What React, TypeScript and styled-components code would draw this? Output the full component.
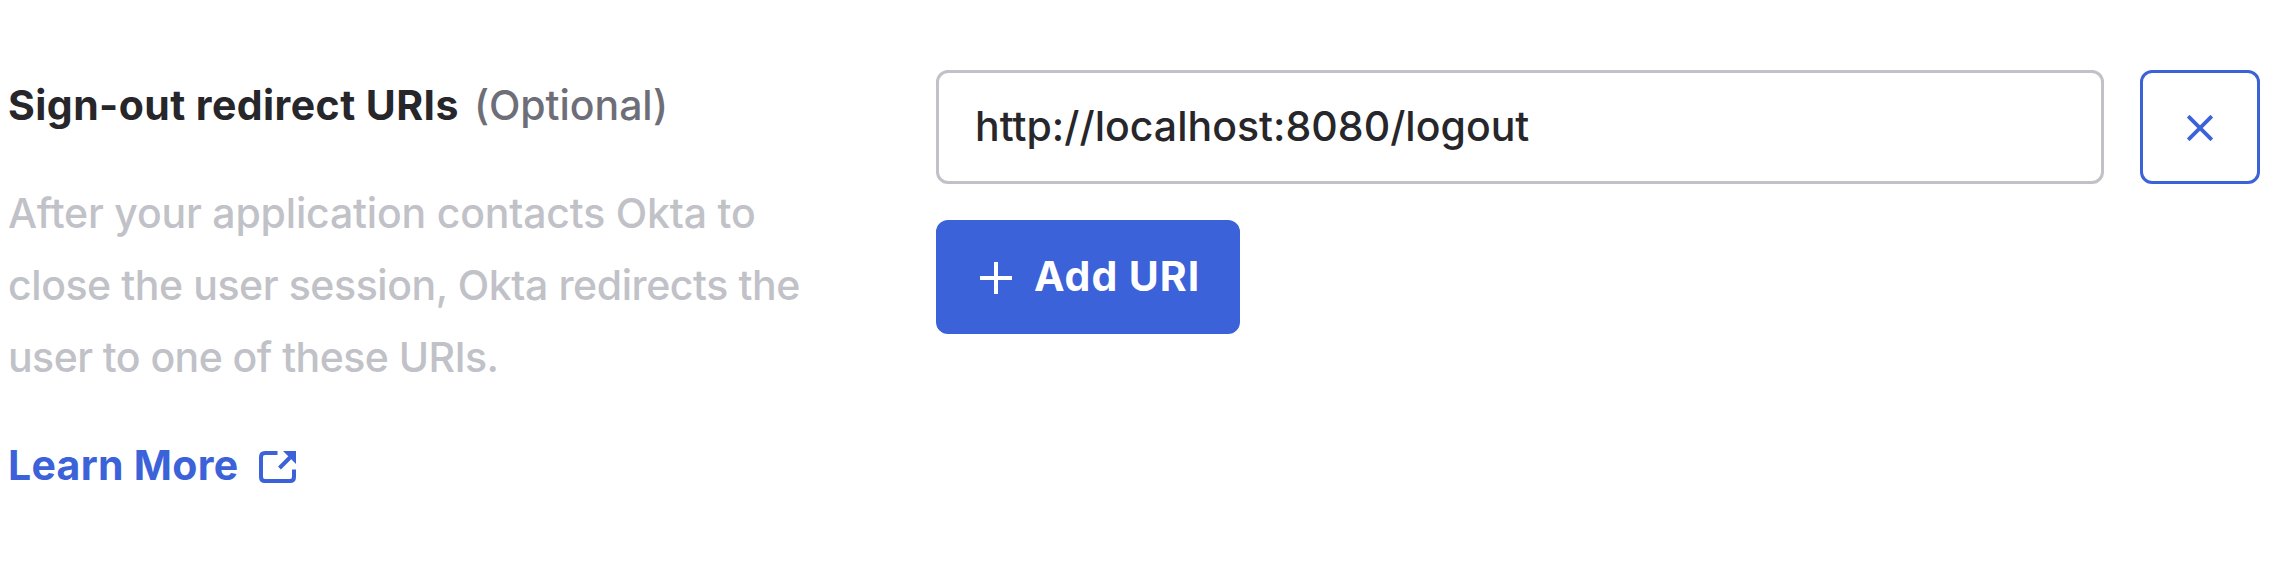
import React from 'react';
import styled, { createGlobalStyle } from 'styled-components';

const blue = '#3c62d9';
const ink = '#27262b';

const GlobalStyle = createGlobalStyle`
  *, *::before, *::after { box-sizing: border-box; }
  body {
    margin: 0;
    background: #fff;
    color: ${ink};
    font: 400 41px/72px Inter, "Liberation Sans", sans-serif;
  }
`;

const Section = styled.section`
  display: grid;
  grid-template-columns: 928px 1324px;
  height: 572px;
  padding: 69px 0 0 8px;
  align-items: start;
`;

const Info = styled.div`
  display: flex;
  flex-direction: column;
  gap: 36px;
`;

const Heading = styled.div`
  display: flex;
  gap: 15px;
  white-space: nowrap;
`;

const Title = styled.label`
  font-weight: 700;
  letter-spacing: 0.43px;
`;

const Optional = styled.span`
  color: #6e6e78;
  font-weight: 500;
  letter-spacing: -0.05px;
`;

const Description = styled.p`
  margin: 0;
  color: #c1c1c8;
  font-weight: 500;
  white-space: nowrap;
`;

const Line = styled.span<{ $tracking: number; $wordGap?: number }>`
  display: block;
  letter-spacing: ${({ $tracking }) => $tracking}px;
  word-spacing: ${({ $wordGap = 0 }) => $wordGap}px;
`;

const LearnMore = styled.a`
  display: flex;
  align-items: center;
  gap: 20px;
  color: ${blue};
  font-weight: 700;
  letter-spacing: 0.3px;
  text-decoration: none;
`;

const Fields = styled.div`
  display: flex;
  flex-direction: column;
  align-items: flex-start;
  gap: 36px;
  padding-top: 1px;
`;

const UriRow = styled.div`
  display: flex;
  gap: 36px;
`;

const UriInput = styled.input`
  width: 1168px;
  height: 114px;
  padding: 0 36px 2px;
  border: 3px solid #c1c1c8;
  border-radius: 12px;
  background: #fff;
  color: ${ink};
  font: inherit;
  font-weight: 500;
  letter-spacing: 0.02px;
  outline: none;
`;

const Button = styled.button<{ $primary?: boolean }>`
  display: flex;
  align-items: center;
  justify-content: ${({ $primary }) => ($primary ? 'flex-start' : 'center')};
  gap: 22px;
  width: ${({ $primary }) => ($primary ? 304 : 120)}px;
  height: 114px;
  padding: ${({ $primary }) => ($primary ? '0 0 0 41px' : '0')};
  border: 3px solid ${blue};
  border-radius: 12px;
  background: ${({ $primary }) => ($primary ? blue : '#fff')};
  color: ${({ $primary }) => ($primary ? '#fff' : blue)};
  font: inherit;
  font-weight: 700;
  white-space: nowrap;
`;

const ButtonLabel = styled.span`
  padding-bottom: 2px;
  letter-spacing: 0.95px;
`;

const Icon = styled.svg<{ $drop?: number }>`
  display: block;
  flex: none;
  margin-top: ${({ $drop = 2 }) => $drop}px;
  fill: none;
  stroke: currentColor;
`;

const PlusIcon = () => (
  <Icon width="32" height="32" viewBox="0 0 32 32" strokeWidth="4">
    <path d="M16 0v32M0 16h32" />
  </Icon>
);

const CloseIcon = () => (
  <Icon width="26" height="26" viewBox="0 0 26 26" strokeWidth="3.8">
    <path d="M1.2 1.2l23.6 23.6M24.8 1.2L1.2 24.8" />
  </Icon>
);

const ExternalIcon = () => (
  <Icon $drop={4} width="37" height="32" viewBox="0 0 37 32" strokeWidth="4">
    <path d="M18.500 2H6Q2 2 2 6V26Q2 30 6 30H31Q35 30 35 26V18.500M20.500 17L31 6.500" />
    <path d="M24 0H37V13Z" fill="currentColor" stroke="none" />
  </Icon>
);

export default function App() {
  return (
    <>
      <GlobalStyle />
      <Section>
        <Info>
          <Heading>
            <Title htmlFor="uri">Sign-out redirect URIs</Title>
            <Optional>(Optional)</Optional>
          </Heading>
          <Description>
            <Line $tracking={-0.19}>After your application contacts Okta to</Line>
            <Line $tracking={-0.43}>close the user session, Okta redirects the</Line>
            <Line $tracking={-0.56}>user to one of these URIs.</Line>
          </Description>
          <LearnMore href="#">
            Learn More
            <ExternalIcon />
          </LearnMore>
        </Info>
        <Fields>
          <UriRow>
            <UriInput id="uri" defaultValue="http://localhost:8080/logout" spellCheck={false} />
            <Button aria-label="Remove URI">
              <CloseIcon />
            </Button>
          </UriRow>
          <Button $primary>
            <PlusIcon />
            <ButtonLabel>Add URI</ButtonLabel>
          </Button>
        </Fields>
      </Section>
    </>
  );
}
